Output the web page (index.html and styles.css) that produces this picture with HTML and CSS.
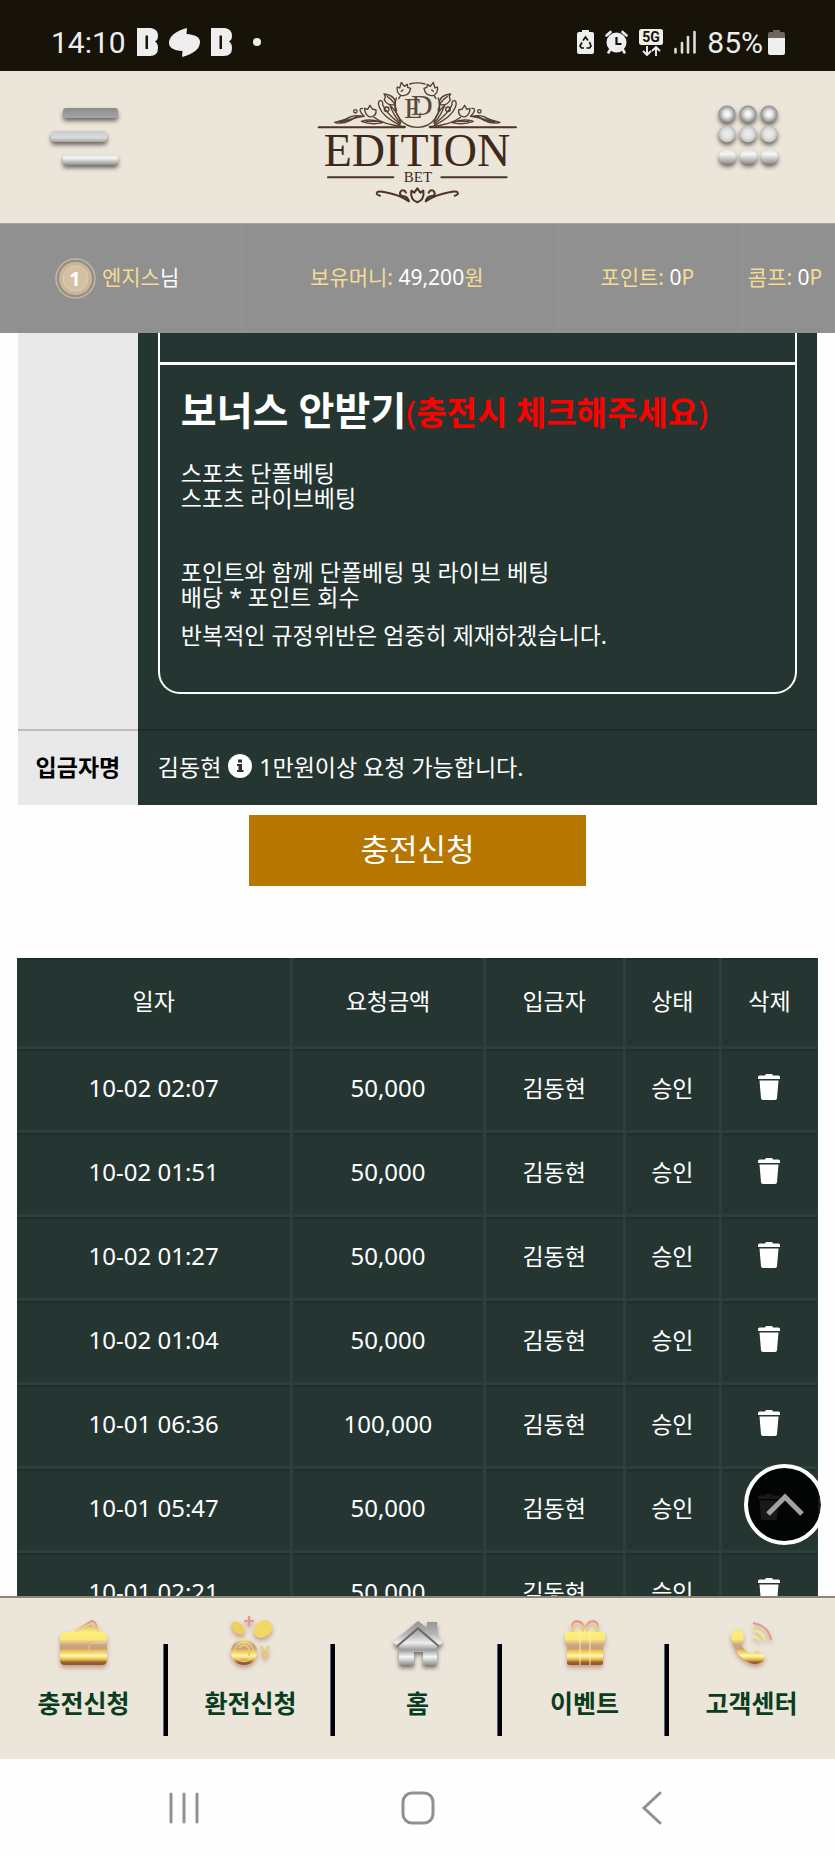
FILE: index.html
```
<!DOCTYPE html>
<html lang="ko">
<head>
  <meta charset="UTF-8" />
  <meta name="viewport" content="width=device-width, initial-scale=1.0"/>
  <title>EDITION BET - 충전신청</title>
  <link rel="stylesheet" href="styles.css">
</head>
<body>
  <!-- shared gradients and symbols -->
  <svg class="defs" width="0" height="0" aria-hidden="true">
    <defs>
      <linearGradient id="gold" x1="0" y1="10" x2="0" y2="56" gradientUnits="userSpaceOnUse">
        <stop offset="0" stop-color="#e8807a"/>
        <stop offset=".12" stop-color="#e2b868"/>
        <stop offset=".26" stop-color="#fdf07a"/>
        <stop offset=".42" stop-color="#fbe878"/>
        <stop offset=".54" stop-color="#cba48c"/>
        <stop offset=".62" stop-color="#cba070"/>
        <stop offset=".68" stop-color="#f0c850"/>
        <stop offset=".78" stop-color="#fff9b0"/>
        <stop offset=".86" stop-color="#e8b840"/>
        <stop offset=".92" stop-color="#96603a"/>
        <stop offset="1" stop-color="#8a5028"/>
      </linearGradient>
      <linearGradient id="silver" x1="0" y1="10" x2="0" y2="56" gradientUnits="userSpaceOnUse">
        <stop offset="0" stop-color="#8f8f90"/>
        <stop offset=".3" stop-color="#b4b5b6"/>
        <stop offset=".5" stop-color="#ededed"/>
        <stop offset=".65" stop-color="#9a9b9c"/>
        <stop offset=".8" stop-color="#f7f7f7"/>
        <stop offset="1" stop-color="#858585"/>
      </linearGradient>
      <linearGradient id="barDark" x1="0" y1="0" x2="0" y2="1">
        <stop offset="0" stop-color="#8a8c8e"/><stop offset="1" stop-color="#a4a5a6"/>
      </linearGradient>
      <linearGradient id="barMid" x1="0" y1="0" x2="0" y2="1">
        <stop offset="0" stop-color="#c9cacc"/><stop offset=".6" stop-color="#d9dbdd"/><stop offset="1" stop-color="#a5a5a5"/>
      </linearGradient>
      <linearGradient id="barLight" x1="0" y1="0" x2="0" y2="1">
        <stop offset="0" stop-color="#e4e4e4"/><stop offset=".3" stop-color="#f6f6f6"/><stop offset="1" stop-color="#8f8f8f"/>
      </linearGradient>
      <radialGradient id="ballDark">
        <stop offset="0" stop-color="#fff"/><stop offset=".35" stop-color="#ececec"/><stop offset="1" stop-color="#8a8b8c"/>
      </radialGradient>
      <radialGradient id="ballLight">
        <stop offset="0" stop-color="#eee"/><stop offset=".6" stop-color="#dedfe0"/><stop offset="1" stop-color="#b9b9b9"/>
      </radialGradient>
      <symbol id="b" viewBox="0 0 21 28">
        <path fill="#eee" fill-rule="evenodd" d="M0 0H14Q21 1 21 8Q21 12 18 13.500Q21 15 21 20Q21 28 13 28H0ZM8.500 7.500V21H11V7.500Z"/>
      </symbol>
      <symbol id="trash" viewBox="0 0 22 26">
        <path fill="#fff" d="M8 0H14L15 1.500H20.500Q22 1.500 22 3V5H0V3Q0 1.500 1.500 1.500H7ZM1.500 6.500H20.500L19 24Q19 26 17 26H5Q3 26 3 24Z"/>
      </symbol>
    </defs>
  </svg>

  <div class="status">
    <span class="time">14:10</span>
    <svg width="21" height="28"><use href="#b"/></svg>
    <svg width="31" height="29" viewBox="0 0 31 29"><path fill="#eee" d="M18 0L17.500 6Q31 7 31 14Q31 24 13 29L13.500 23Q0 22 0 15Q0 5 18 0Z"/></svg>
    <svg width="21" height="28"><use href="#b"/></svg>
    <i class="dot"></i>
    <div class="status-right">
      <svg width="17" height="24" viewBox="0 0 17 24">
        <path fill="#eee" d="M5 0H12V2H15Q17 2 17 4V22Q17 24 15 24H2Q0 24 0 22V4Q0 2 2 2H5Z"/>
        <path fill="none" stroke="#171309" stroke-width="1.700" d="M6 10.500L8.500 7L11 10.500M12.500 12L14 16L12.500 18H9.500M7 18H4.500L3 16L5 12.500"/>
      </svg>
      <svg width="23" height="24" viewBox="0 0 23 24">
        <circle cx="11.500" cy="12.500" r="10" fill="#eee"/>
        <path fill="none" stroke="#eee" stroke-width="2.600" stroke-linecap="round" d="M1.500 5.500L5.500 2M21.500 5.500L17.500 2M5 20L3.500 22.500M18 20L19.500 22.500"/>
        <path fill="none" stroke="#171309" stroke-width="2.200" d="M11.500 7V14H16.500"/>
      </svg>
      <svg width="24" height="27" viewBox="0 0 24 27">
        <rect width="24" height="16" rx="2.500" fill="#eee"/>
        <text x="12" y="13" class="net">5G</text>
        <path fill="none" stroke="#eee" stroke-width="1.900" d="M8 17V26M4 22L8 26L12 22M17 27V18M13 22L17 18L21 22"/>
      </svg>
      <svg width="22" height="24" viewBox="0 0 22 24">
        <path fill="none" stroke="#ddd" stroke-width="2.600" stroke-linecap="round" d="M1.500 19V22.500M8 13V22.500M14 7V22.500M20.500 2V22.500"/>
      </svg>
      <span class="percent">85%</span>
      <svg width="17" height="25" viewBox="0 0 17 25">
        <path fill="#6b675e" d="M5 0H12V2H15Q17 2 17 4V8H0V4Q0 2 2 2H5Z"/>
        <path fill="#eee" d="M0 8H17V23Q17 25 15 25H2Q0 25 0 23Z"/>
      </svg>
    </div>
  </div>

  <header class="header">
    <button type="button" class="icon-btn" aria-label="메뉴">
      <svg width="80" height="75" viewBox="0 0 80 75">
        <rect class="metal" x="18" y="8" width="55" height="10" rx="3" fill="url(#barDark)"/>
        <rect class="metal" x="6" y="31" width="56" height="11" rx="4" fill="url(#barMid)"/>
        <rect class="metal" x="18" y="55" width="55" height="10" rx="3" fill="url(#barLight)"/>
      </svg>
    </button>

    <a href="#" class="logo" aria-label="EDITION BET">
      <svg width="205" height="128" viewBox="315 79 205 128">
        <g transform="translate(300 70) scale(.3333)">
          <g id="flora" class="ink">
            <path d="M352 172A66 66 0 0 1 289 84M304 64L309 60"/>
            <path d="M302 76Q288 66 292 51L299 54L304 37L313 49L322 43L323 52L332 55Q328 74 314 76Q306 78 302 76ZM302 76L296 86"/>
            <path d="M286 104Q288 76 252 72Q259 80 253 89Q262 108 286 104ZM262 80Q276 88 284 102L290 122"/>
            <path d="M248 104Q250 91 240 92Q232 96 238 112Q248 140 300 166M248 104Q256 126 300 162"/>
            <path d="M270 106Q280 136 302 160M270 106Q292 126 302 156"/>
            <circle cx="260" cy="118" r="7"/>
            <circle cx="166" cy="124" r="5"/>
            <path d="M204 138Q194 130 194 115L203 118L210 106L217 117L228 120Q230 136 216 140Q208 142 204 138Z"/>
            <path d="M188 115Q178 114 181 124Q184 132 192 138"/>
            <path d="M104 157Q138 150 152 140Q170 134 192 139Q164 142 150 152Q126 164 104 157ZM120 157Q150 150 172 140"/>
            <path d="M184 154Q214 144 248 158Q214 166 184 154ZM198 154H232"/>
            <path d="M222 142Q252 166 316 170"/>
            <path class="rule" d="M56 172H314M84 322H280"/>
            <path class="rule" d="M240 377Q226 374 232 366Q238 362 256 367Q296 374 327 394Q322 376 304 378Q296 370 304 362Q314 358 318 368"/>
          </g>
          <use href="#flora" transform="translate(704 0) scale(-1 1)"/>
          <path class="ink" d="M329 42Q352 35 375 42"/>
          <path class="ink bold" d="M352 397Q330 390 334 362L343 368L352 355L361 368L370 362Q374 390 352 397Z"/>
        </g>
        <text class="mono" x="404" y="118">E</text>
        <text class="mono" x="411" y="115">D</text>
        <text class="word" x="417" y="166">EDITION</text>
        <text class="sub" x="418" y="182">BET</text>
      </svg>
    </a>

    <button type="button" class="icon-btn" aria-label="전체보기">
      <svg width="80" height="75" viewBox="0 0 80 75">
        <g class="metal" fill="url(#ballDark)">
          <circle cx="17" cy="14" r="8.500"/><circle cx="38" cy="14" r="8.500"/><circle cx="59" cy="14" r="8.500"/>
        </g>
        <g class="metal" fill="url(#ballLight)">
          <circle cx="17" cy="34" r="8.500"/><circle cx="38" cy="34" r="8.500"/><circle cx="59" cy="34" r="8.500"/>
        </g>
        <g class="metal" fill="url(#barLight)">
          <rect x="9" y="50" width="17" height="14" rx="7"/><rect x="30" y="50" width="17" height="14" rx="7"/><rect x="51" y="50" width="17" height="14" rx="7"/>
        </g>
      </svg>
    </button>
  </header>

  <div class="userbar">
    <div>
      <svg width="41" height="41" viewBox="0 0 41 41">
        <circle cx="20.500" cy="20.500" r="19.500" fill="none" stroke="#c9b596" stroke-width="1.500"/>
        <circle cx="20.500" cy="20.500" r="16.500" fill="#cdb595"/>
        <circle cx="20.500" cy="20.500" r="12.500" fill="#d6c0a3" stroke="#e0cfb6"/>
        <text x="20" y="28" class="rank">1</text>
      </svg>
      <span><em>엔지스</em>님</span>
    </div>
    <div><span><em>보유머니:</em> 49,200<em>원</em></span></div>
    <div><span><em>포인트:</em> 0<em>P</em></span></div>
    <div><span><em>콤프:</em> 0<em>P</em></span></div>
  </div>

  <div class="stage">
    <main class="content">
      <table class="form">
        <tr>
          <th></th>
          <td class="bonus">
            <div class="box prev"></div>
            <div class="box last">
              <h2>보너스 안받기<span>(<b>충전시 체크해주세요</b>)</span></h2>
              <p>스포츠 단폴베팅<br>스포츠 라이브베팅</p>
              <p class="spaced">포인트와 함께 단폴베팅 및 라이브 베팅<br>배당 * 포인트 회수</p>
              <p class="warn">반복적인 규정위반은 엄중히 제재하겠습니다.</p>
            </div>
          </td>
        </tr>
        <tr class="name-row">
          <th>입금자명</th>
          <td>
            <div class="depositor">
              <span>김동현</span>
              <svg width="24" height="24" viewBox="0 0 24 24">
                <circle cx="12" cy="12" r="12" fill="#fff"/>
                <path fill="#253632" d="M10 5.500H14V8.500H10ZM9 10H14V16H15.500V18H9V16H10.500V12H9Z"/>
              </svg>
              <span>1만원이상 요청 가능합니다.</span>
            </div>
          </td>
        </tr>
      </table>

      <button type="button" class="submit">충전신청</button>

      <table class="list">
        <thead>
          <tr><th class="c-date">일자</th><th class="c-amount">요청금액</th><th class="c-name">입금자</th><th class="c-state">상태</th><th class="c-del">삭제</th></tr>
        </thead>
        <tbody>
          <tr><td class="num">10-02 02:07</td><td class="num">50,000</td><td>김동현</td><td>승인</td><td><button type="button" class="del" aria-label="삭제"><svg width="22" height="26"><use href="#trash"/></svg></button></td></tr>
          <tr><td class="num">10-02 01:51</td><td class="num">50,000</td><td>김동현</td><td>승인</td><td><button type="button" class="del" aria-label="삭제"><svg width="22" height="26"><use href="#trash"/></svg></button></td></tr>
          <tr><td class="num">10-02 01:27</td><td class="num">50,000</td><td>김동현</td><td>승인</td><td><button type="button" class="del" aria-label="삭제"><svg width="22" height="26"><use href="#trash"/></svg></button></td></tr>
          <tr><td class="num">10-02 01:04</td><td class="num">50,000</td><td>김동현</td><td>승인</td><td><button type="button" class="del" aria-label="삭제"><svg width="22" height="26"><use href="#trash"/></svg></button></td></tr>
          <tr><td class="num">10-01 06:36</td><td class="num">100,000</td><td>김동현</td><td>승인</td><td><button type="button" class="del" aria-label="삭제"><svg width="22" height="26"><use href="#trash"/></svg></button></td></tr>
          <tr><td class="num">10-01 05:47</td><td class="num">50,000</td><td>김동현</td><td>승인</td><td><button type="button" class="del" aria-label="삭제"><svg width="22" height="26"><use href="#trash"/></svg></button></td></tr>
          <tr><td class="num">10-01 02:21</td><td class="num">50,000</td><td>김동현</td><td>승인</td><td><button type="button" class="del" aria-label="삭제"><svg width="22" height="26"><use href="#trash"/></svg></button></td></tr>
        </tbody>
      </table>
    </main>

    <button type="button" class="to-top" aria-label="맨 위로">
      <svg width="38" height="24" viewBox="0 0 38 24"><path fill="none" stroke="#a3a3a3" stroke-width="5" d="M2 21L19 4L36 21"/></svg>
    </button>
  </div>

  <nav class="tabs">
    <a href="#">
      <svg width="66" height="66" viewBox="0 0 66 66">
        <g class="glow">
          <path fill="none" stroke="url(#gold)" stroke-width="2" d="M22 22L39 12Q42 10 44 13L49 22"/>
          <path fill="url(#gold)" d="M26 22L38 15Q41 14 43 17L47 22H52Q56 23 56 28V50Q56 55 51 55H14Q9 55 9 50V27Q9 22 14 22Z"/>
          <path fill="none" stroke="#e6c9a4" d="M56 33H43Q38 33 38 37.500T43 42H56"/>
        </g>
      </svg>
      <span>충전신청</span>
    </a>
    <a href="#">
      <svg width="66" height="66" viewBox="0 0 66 66">
        <g class="glow">
          <ellipse cx="20" cy="18" rx="8" ry="5" transform="rotate(42 20 18)" fill="#efcf62"/>
          <ellipse cx="45" cy="19" rx="10" ry="8" transform="rotate(-35 45 19)" fill="#f3d866"/>
          <path stroke="#e49a88" stroke-width="2" d="M31 6V16M26 11H36"/>
          <circle cx="26" cy="42" r="13" fill="url(#gold)"/>
          <circle cx="26" cy="42" r="9.500" fill="none" stroke="#f3dfb2"/>
          <path fill="none" stroke="#e8c873" stroke-width="2" d="M21 38Q26 32 31 38V46M43 36L47 43L51 36M43 44H51M47 41V49"/>
        </g>
      </svg>
      <span>환전신청</span>
    </a>
    <a href="#">
      <svg width="66" height="66" viewBox="0 0 66 66">
        <g class="glow dark">
          <path fill="url(#silver)" d="M33 11L42 18V12H52V26L58 32L54 36L33 18L12 36L8 32Z"/>
          <path fill="url(#silver)" d="M33 20L52 36V53Q52 55 50 55H38V42H29V55H16Q14 55 14 53V36Z"/>
          <path fill="none" stroke="#6e6660" stroke-width="1.500" d="M12 36L33 18L54 36"/>
        </g>
      </svg>
      <span>홈</span>
    </a>
    <a href="#">
      <svg width="66" height="66" viewBox="0 0 66 66">
        <g class="glow">
          <path fill="none" stroke="url(#gold)" stroke-width="2.200" d="M31 22C15 22 19 8 28 12Q33 15 33 22Q33 15 38 12C47 8 51 22 35 22"/>
          <path fill="url(#gold)" d="M15 22H51Q53 22 53 24V34H51V53Q51 55 49 55H17Q15 55 15 53V34H13V24Q13 22 15 22Z"/>
          <path fill="none" stroke="#fff3b4" stroke-width="1.500" opacity=".6" d="M28 23V55M38 23V55"/>
        </g>
      </svg>
      <span>이벤트</span>
    </a>
    <a href="#">
      <svg width="66" height="66" viewBox="0 0 66 66">
        <g class="glow">
          <path fill="url(#gold)" d="M12 26Q13 20 18 20Q22 18 24 23L25 30Q24 33 21 33Q25 41 33 44Q36 41 38 41L45 45Q47 48 44 51Q38 56 31 53Q15 46 12 26Z"/>
          <path fill="none" stroke="#e49a82" stroke-width="2" d="M34 13Q50 16 52 30"/>
          <path fill="none" stroke="url(#gold)" stroke-width="2" d="M34 20Q43 21 46 30M34 26Q38 27 40 31"/>
        </g>
      </svg>
      <span>고객센터</span>
    </a>
  </nav>

  <div class="sysnav">
    <button type="button" aria-label="최근 앱"><svg width="34" height="34" viewBox="0 0 34 34"><path d="M4 3V31M17 3V31M30 3V31"/></svg></button>
    <button type="button" aria-label="홈 화면"><svg width="34" height="34" viewBox="0 0 34 34"><rect x="2" y="2" width="30" height="30" rx="9"/></svg></button>
    <button type="button" aria-label="뒤로"><svg width="34" height="34" viewBox="0 0 34 34"><path d="M26 2L10 17L26 32"/></svg></button>
  </div>
</body>
</html>
```
FILE: styles.css
```
* {
  box-sizing: border-box;
}
body {
  margin: 0;
  height: 100vh;
  display: flex;
  flex-direction: column;
  background: #fefefe;
  color: #fff;
  font-family: "Noto Sans", "Noto Sans CJK KR", sans-serif;
  font-size: 23px;
}
button {
  font-family: inherit;
  border: none;
  padding: 0;
  background: none;
  color: inherit;
  cursor: pointer;
}
svg {
  display: block;
  flex-shrink: 0;
}
.defs {
  position: absolute;
}

/* phone status bar */
.status {
  flex: none;
  height: 71px;
  padding: 13px 50px 0 51px;
  display: flex;
  align-items: center;
  gap: 11px;
  background: #171309;
  color: #eee;
  font-family: Roboto, sans-serif;
  font-size: 30px;
}
.status-right {
  margin-left: auto;
  display: flex;
  align-items: center;
  gap: 11px;
}
.percent {
  margin-right: -6px;
}
.dot {
  width: 8px;
  height: 8px;
  margin-left: 10px;
  border-radius: 50%;
  background: #eee;
}
.net {
  font: bold 14px Roboto, sans-serif;
  fill: #171309;
  text-anchor: middle;
}

/* header */
.header {
  flex: none;
  height: 152px;
  padding: 0 45px;
  display: flex;
  justify-content: space-between;
  align-items: flex-start;
  background: #ebe5da;
}
.icon-btn {
  margin-top: 29px;
}
.metal {
  filter: drop-shadow(0 3px 2px rgba(60,50,40,0.7));
}
.logo {
  margin-top: 8px;
}
.ink {
  fill: none;
  stroke: #55402f;
  stroke-width: 4;
  stroke-linecap: round;
  stroke-linejoin: round;
}
.ink .rule, .bold {
  stroke: #4a3526;
  stroke-width: 6;
}
.word, .sub, .mono {
  font-family: "Liberation Serif", serif;
  fill: #40291b;
}
.word {
  font-size: 46px;
  text-anchor: middle;
}
.sub {
  font-size: 15px;
  text-anchor: middle;
}
.mono {
  font-size: 30px;
  fill: #5d4938;
}

/* user info */
.userbar {
  flex: none;
  height: 110px;
  display: grid;
  grid-template-columns: 29fr 38fr 22fr 11fr;
  background: #909090;
  border-top: 1px solid #a8a59f;
  font-size: 21px;
  white-space: nowrap;
}
.userbar div {
  padding-right: 7px;
  display: flex;
  justify-content: center;
  align-items: center;
  gap: 6px;
  border-right: 1px solid #969696;
}
.userbar span {
  padding-bottom: 5px;
}
.userbar em {
  font-style: normal;
  color: #f5dc93;
}
.rank {
  font: bold 20px "Noto Sans", sans-serif;
  fill: #fff;
  text-anchor: middle;
}

/* content */
.stage {
  flex: 1;
  min-height: 0;
  position: relative;
}
.content {
  height: 100%;
  padding: 0 17px;
  overflow: hidden;
}
.form {
  width: 100%;
  border-spacing: 0;
  border: 0 solid #fefefe;
  border-width: 0 1px;
}
.form th {
  width: 15%;
  padding: 0;
  background: #e9e9e9;
  color: #000;
}
.form td {
  padding: 0 20px;
  background: #253632;
}
.form .bonus {
  padding-bottom: 35px;
}
.box {
  border: 2px solid #fff;
  border-top: none;
}
.prev {
  height: 32px;
  border-bottom-width: 3px;
}
.last {
  padding: 25px 21px 44px;
  border-radius: 0 0 22px 22px;
}
.last h2 {
  margin: 0 0 28px;
  font-size: 39px;
  line-height: 40px;
}
.last h2 span {
  color: #f00;
  font-size: 33px;
  font-weight: normal;
}
.last p {
  margin: 0;
  line-height: 25px;
}
.last .spaced {
  margin-top: 49px;
}
.last .warn {
  margin-top: 13px;
}
.name-row th {
  border-top: 2px solid #bdbdbd;
}
.form .name-row th, .form .name-row td {
  height: 76px;
  padding-bottom: 5px;
}
.name-row td {
  border-top: 2px solid #1c2a27;
}
.depositor {
  display: flex;
  align-items: center;
  gap: 7px;
}
.submit {
  display: block;
  width: 42%;
  height: 71px;
  margin: 10px auto 72px;
  padding-bottom: 6px;
  background: #b67600;
  font-size: 31px;
}

.list {
  width: 100%;
  table-layout: fixed;
  border-collapse: separate;
  border-spacing: 0;
  background: #253632;
  text-align: center;
}
.list th, .list td {
  height: 84px;
  padding: 0 0 5px;
  font-weight: normal;
  border-right: 3px solid #2e3e3a;
  border-bottom: 3px solid #2e3e3a;
  box-shadow: inset 0 2px #1f2e2b;
}
.list th {
  height: 91px;
}
.list .num {
  font-size: 24px;
}
.list th:last-child, .list td:last-child {
  border-right-width: 1px;
}
.c-date { width: 34.5%; }
.c-amount { width: 24%; }
.c-name { width: 17.5%; }
.c-state { width: 12%; }
.c-del { width: 12%; }
.del {
  display: block;
  margin: 0 auto;
}
.to-top {
  position: absolute;
  right: 10px;
  bottom: 51px;
  width: 81px;
  height: 81px;
  display: flex;
  justify-content: center;
  align-items: center;
  border: 4px solid #fff;
  border-radius: 50%;
  background: rgba(0,0,0,0.9);
  background-clip: padding-box;
}

/* bottom menu */
.tabs {
  flex: none;
  height: 163px;
  display: flex;
  background: #ebe5da;
  border-top: 2px solid #8c8677;
}
.tabs a {
  flex: 1;
  position: relative;
  padding-top: 12px;
  display: flex;
  flex-direction: column;
  align-items: center;
  gap: 11px;
  color: #0a3d20;
  font-size: 25px;
  line-height: 32px;
  font-weight: bold;
  text-decoration: none;
}
.tabs a + a::before {
  content: "";
  position: absolute;
  left: -4px;
  top: 46px;
  width: 4px;
  height: 92px;
  background: #000;
  border-left: 1px solid #56608a;
}
.glow {
  filter: drop-shadow(0 3px 2px rgba(160,90,60,0.5));
}
.glow.dark {
  filter: drop-shadow(0 3px 2px rgba(40,35,30,0.6));
}

/* android buttons */
.sysnav {
  flex: none;
  height: 97px;
  padding: 0 67px;
  display: flex;
  align-items: center;
  background: #fefefe;
}
.sysnav button {
  flex: 1;
  display: flex;
  justify-content: center;
}
.sysnav svg {
  fill: none;
  stroke: #919191;
  stroke-width: 3;
  stroke-linecap: round;
}
```
